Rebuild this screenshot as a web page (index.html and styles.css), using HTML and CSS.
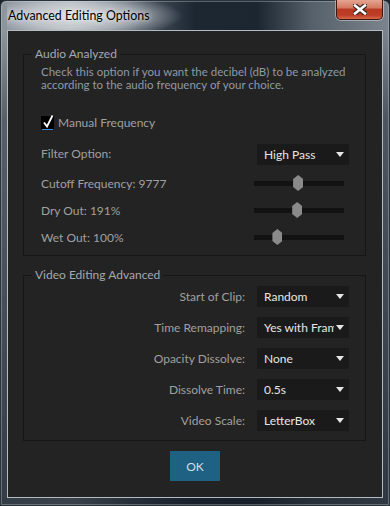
FILE: index.html
```html
<!DOCTYPE html>
<html>

<head>
    <title>Advanced Editing Options</title>
    <link rel="stylesheet" href="styles.css">
</head>

<body>
    <div class="window">
        <!-- title bar -->
        <div class="titlebar">
            <span class="title">Advanced Editing Options</span>
            <button class="close" type="button">
                <svg width="14" height="11" viewBox="0 0 14 11">
                    <path d="M2 1.5 L12 9.5 M12 1.5 L2 9.5" stroke="#3b2522" stroke-width="5" stroke-linecap="square" />
                    <path d="M2 1.5 L12 9.5 M12 1.5 L2 9.5" stroke="#ffffff" stroke-width="2.6" stroke-linecap="square" />
                </svg>
            </button>
        </div>

        <div class="content">
            <!-- Audio -->
            <fieldset class="group audio">
                <legend>Audio Analyzed</legend>
                <p class="desc">Check this option if you want the decibel (dB) to be analyzed<br>according to the audio frequency of your choice.</p>

                <label class="check_row">
                    <span class="checkbox">
                        <svg width="14" height="14" viewBox="0 0 14 14">
                            <path d="M3 7.5 L6 11.5 L11.5 0.5" fill="none" stroke="#ffffff" stroke-width="1.8" />
                        </svg>
                    </span>
                    Manual Frequency
                </label>

                <div class="row filter_row">
                    <span class="label">Filter Option:</span>
                    <div class="dropdown"><span class="value">High Pass</span><span class="arrow"></span></div>
                </div>

                <div class="row slider_row">
                    <span class="label">Cutoff Frequency: 9777</span>
                    <div class="slider"><span class="thumb" style="left: 49%"></span></div>
                </div>
                <div class="row slider_row">
                    <span class="label">Dry Out: 191%</span>
                    <div class="slider"><span class="thumb" style="left: 48%"></span></div>
                </div>
                <div class="row slider_row">
                    <span class="label">Wet Out: 100%</span>
                    <div class="slider"><span class="thumb" style="left: 26%"></span></div>
                </div>
            </fieldset>

            <!-- Video -->
            <fieldset class="group video">
                <legend>Video Editing Advanced</legend>
                <div class="row select_row">
                    <span class="label">Start of Clip:</span>
                    <div class="dropdown"><span class="value">Random</span><span class="arrow"></span></div>
                </div>
                <div class="row select_row">
                    <span class="label">Time Remapping:</span>
                    <div class="dropdown"><span class="value">Yes with Frame Blending</span><span class="arrow"></span></div>
                </div>
                <div class="row select_row">
                    <span class="label">Opacity Dissolve:</span>
                    <div class="dropdown"><span class="value">None</span><span class="arrow"></span></div>
                </div>
                <div class="row select_row">
                    <span class="label">Dissolve Time:</span>
                    <div class="dropdown"><span class="value">0.5s</span><span class="arrow"></span></div>
                </div>
                <div class="row select_row">
                    <span class="label">Video Scale:</span>
                    <div class="dropdown"><span class="value">LetterBox</span><span class="arrow"></span></div>
                </div>
            </fieldset>

            <div class="actions">
                <button class="ok" type="button">OK</button>
            </div>
        </div>
    </div>
</body>

</html>
```

FILE: styles.css
```css
* {
    margin: 0;
    padding: 0;
    box-sizing: border-box;
}

body {
    width: 390px;
    height: 506px;
    overflow: hidden;
    font-family: Lato, "Open Sans", sans-serif;
    font-size: 12px;
    background: #1c242d;
}

/* window frame */
.window {
    width: 390px;
    height: 506px;
    padding: 0 6px 7px 6px;
    border: 1px solid #2a323a;
    border-radius: 6px 6px 0 0;
    background:
        linear-gradient(180deg, rgba(0, 0, 0, 0) 0, rgba(0, 0, 0, 0) 30px, rgba(22, 30, 40, 0.45) 120px, rgba(22, 30, 40, 0.75) 100%),
        linear-gradient(90deg, #8b939b 0%, #a3a9af 18%, #4a5561 36%, #1d2732 50%, #1c2631 66%, #56606a 80%, #7c858d 100%);
    box-shadow: inset 0 0 0 1px rgba(200, 210, 220, 0.35);
}

.titlebar {
    height: 29px;
    display: flex;
    justify-content: space-between;
    align-items: center;
    background: radial-gradient(ellipse 100px 22px at 76px 15px, rgba(222, 226, 230, 0.95), rgba(222, 226, 230, 0.5) 60%, rgba(222, 226, 230, 0));
}

.title {
    padding-left: 1px;
    font-size: 12.4px;
    color: #000;
    text-shadow: 0 0 5px rgba(255, 255, 255, 0.9);
}

.close {
    align-self: flex-start;
    width: 47px;
    height: 20px;
    margin-top: -1px;
    border: 1px solid #3d1710;
    border-top: none;
    border-radius: 0 0 5px 5px;
    background: linear-gradient(180deg, #e3a592 0%, #d47a62 40%, #b93a22 50%, #bd3f25 80%, #d8684a 100%);
    box-shadow: 0 0 0 1px rgba(230, 235, 240, 0.45);
    display: flex;
    align-items: center;
    justify-content: center;
}

/* client area */
.content {
    height: 468px;
    background: #232323;
    border: 1px solid #b2bac2;
    padding: 0 16px 0 15px;
}

.group {
    border: 1px solid #161616;
    padding: 0 16px 10px 17px;
}

.group legend {
    margin-left: -9px;
    padding: 0 3px;
    line-height: 16px;
    color: #a3a9af;
}

.audio {
    margin-top: 15px;
}

.video {
    margin-top: 11px;
    padding-bottom: 9px;
}

.desc {
    margin-top: 3px;
    line-height: 13px;
    font-size: 11.5px;
    color: #8e9aa8;
}

.check_row {
    display: flex;
    align-items: center;
    height: 14px;
    margin-top: 24px;
    color: #a0a0a0;
}

.checkbox {
    width: 13px;
    height: 13px;
    margin-right: 4px;
    background: #000;
    box-shadow: 0 2px 0 -1px #3a8ad6;
}

.checkbox svg {
    overflow: visible;
    margin-top: -1px;
}

.row {
    display: flex;
    align-items: center;
    justify-content: space-between;
}

.label {
    color: #a0a0a0;
}

.filter_row {
    height: 21px;
    margin-top: 15px;
}

.filter_row .label {
    margin-top: -3px;
}

.slider_row {
    height: 16px;
    margin-top: 11px;
}

.filter_row + .slider_row {
    margin-top: 10px;
}

.slider {
    position: relative;
    width: 90px;
    height: 5px;
    margin-right: 5px;
    background: #121212;
}

.thumb {
    position: absolute;
    top: 50%;
    width: 10px;
    height: 16px;
    transform: translate(-50%, -50%);
    background: #8a8a8a;
    clip-path: polygon(50% 0, 100% 25%, 100% 75%, 50% 100%, 0 75%, 0 25%);
}

.select_row {
    height: 21px;
    margin-top: 10px;
    justify-content: flex-end;
    gap: 12px;
}

.video legend + .select_row {
    margin-top: 3px;
}

.dropdown {
    width: 92px;
    height: 21px;
    display: flex;
    align-items: center;
    padding: 0 5px 0 7px;
    background: #1a1a1a;
    color: #e6e6e6;
}

.dropdown .value {
    flex: 1;
    overflow: hidden;
    white-space: nowrap;
    margin-right: 2px;
}

.arrow {
    width: 0;
    height: 0;
    border-left: 4.5px solid transparent;
    border-right: 4.5px solid transparent;
    border-top: 5px solid #e6e6e6;
}

.actions {
    display: flex;
    justify-content: center;
    margin-top: 10px;
}

.ok {
    width: 50px;
    height: 30px;
    border: none;
    background: #1e6183;
    color: #d6dce2;
    font-family: Lato, "Open Sans", sans-serif;
    font-size: 12px;
    margin-left: 1px;
}
```
